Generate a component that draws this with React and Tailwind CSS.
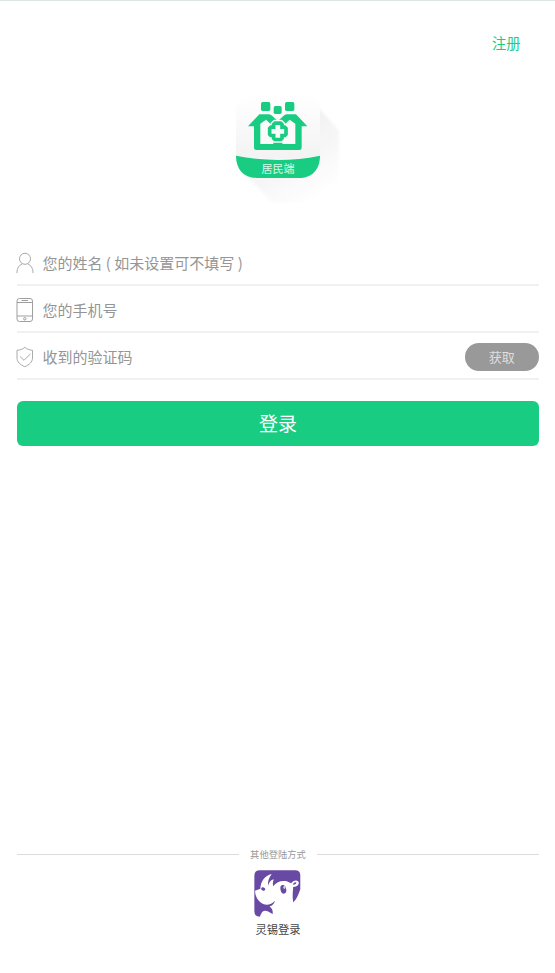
function AppLogo() {
  return (
    <svg width="130" height="120" viewBox="0 0 390 360">
      <defs>
        <linearGradient id="tile" x1="0" y1="0" x2="0" y2="1">
          <stop offset="0" stopColor="#ffffff" />
          <stop offset="1" stopColor="#f3f3f3" />
        </linearGradient>
        <linearGradient id="shade" gradientUnits="userSpaceOnUse" x1="170" y1="130" x2="290" y2="318">
          <stop offset="0" stopColor="#f1f1f1" />
          <stop offset="0.55" stopColor="#f8f8f8" />
          <stop offset="1" stopColor="#ffffff" />
        </linearGradient>
        <filter id="soften">
          <feGaussianBlur stdDeviation="5" />
        </filter>
      </defs>
      <path d="M276 48L342 122V340H144L62 254Z" fill="url(#shade)" filter="url(#soften)" />
      <path d="M33 70Q33 14 90 14H228Q285 14 285 70V204H33Z" fill="url(#tile)" />
      <path d="M33 197Q159 223 285 197C285 240 260 264 222 264H96C58 264 33 240 33 197Z" fill="#18cd82" />
      <g fill="#18cd82">
        <rect x="108" y="36" width="28" height="27" rx="5" />
        <rect x="146" y="48" width="24" height="24" rx="5" />
        <rect x="180" y="36" width="28" height="27" rx="5" />
        <path d="M69 109L103 73H131Q138 73 142 78L158.500 93L175 78Q179 73 186 73H213L247 109H230V173Q230 180 223 180H94Q87 180 87 173V109Z" />
      </g>
      <path d="M106 162V101L123 89L141 106L132 125L145 146V162ZM211 162V101L194 89L176 106L185 125L172 146V162Z" fill="#fafafa" />
      <g transform="translate(158.500 124)" strokeLinejoin="round">
        <path d="M-10-28H10L16-22V-18L18-16H22L28-10V10L22 16H18L16 18V22L10 28H-10L-16 22V18L-18 16H-22L-28 10V-10L-22-16H-18L-16-18V-22Z" fill="#18cd82" stroke="#fafafa" strokeWidth="13" />
        <path d="M-10-28H10L16-22V-18L18-16H22L28-10V10L22 16H18L16 18V22L10 28H-10L-16 22V18L-18 16H-22L-28 10V-10L-22-16H-18L-16-18V-22Z" fill="#18cd82" stroke="#18cd82" strokeWidth="4" />
        <path d="M-7-19H7V-7H19V7H7V19H-7V7H-19V-7H-7Z" fill="#fafafa" />
      </g>
      <text x="159" y="249" textAnchor="middle" fontSize="33" fill="#d9f9e9" className="font-['Noto_Sans_CJK_SC',sans-serif]">居民端</text>
    </svg>
  );
}

function UserIcon() {
  return (
    <svg width="18" height="24" viewBox="0 0 18 24" fill="none" stroke="#aaaaaa" strokeWidth="1">
      <circle cx="9" cy="7.8" r="5.5" />
      <path d="M.9 22C.9 17 3.2 14 6.3 12.900M11.8 12.900C14.8 14 17.1 17 17.1 22" />
    </svg>
  );
}

function PhoneIcon() {
  return (
    <svg width="18" height="24" viewBox="0 0 18 24" fill="none" stroke="#9f9f9f" strokeWidth="1">
      <rect x="1" y=".5" width="15.5" height="23" rx="2.5" />
      <path d="M1 4.5H16.5M1 18H16.5M5.500 2.5H12" />
      <circle cx="8.8" cy="20.8" r="1.2" />
    </svg>
  );
}

function ShieldIcon() {
  return (
    <svg width="18" height="24" viewBox="0 0 18 24" fill="none" stroke="#aaaaaa" strokeWidth="1" strokeLinejoin="round">
      <path d="M8.8 2.3C6.8 4.2 4 5.2 1 5.2V13C1 17 4.2 19.7 8.8 21.7C13.4 19.7 16.5 17 16.5 13V5.2C13.6 5.2 10.8 4.2 8.8 2.3Z" />
      <path d="M4 11.5L8 15.3L14.5 8.800" />
    </svg>
  );
}

function RhinoLogo() {
  return (
    <svg width="47" height="47" viewBox="0 0 141 141">
      <g transform="scale(1.06 1)">
        <path d="M17 1H116Q131 1 131 16V58C126 74 121 88 111 97L90 122L53 132L16 140Q1 140 1 124V17Q1 1 17 1Z" fill="#6849a3" />
        <path d="M3 62L18 56C19 34 30 17 50 12C42 24 38 36 40 47C42 38 47 30 56 28C53 36 53 42 54 49C64 35 78 31 93 34L105 40C111 29 127 28 127 39C126 48 118 50 111 51C110 65 108 80 111 97V141H16C21 129 23 123 31 122C41 121 47 130 53 132C54 121 51 116 44 109C52 107 58 100 59 92C50 103 38 107 26 102C12 95 3 79 3 62Z" fill="#ffffff" />
        <ellipse cx="26" cy="57" rx="6" ry="5" transform="rotate(20 26 57)" fill="#6849a3" />
        <ellipse cx="83" cy="58" rx="8" ry="13" transform="rotate(-12 83 58)" fill="#6849a3" />
        <ellipse cx="86" cy="52" rx="3" ry="5" fill="#d7cceb" />
        <path d="M110 44C112 37 120 35 120 39C119 43 115 44 110 44Z" fill="#6849a3" />
      </g>
    </svg>
  );
}

function Field({ icon, placeholder, children }) {
  return (
    <div className="flex h-[47px] items-center border-b-2 border-[#f1f1f1] pt-0.5">
      <div className="ml-[-1px]">{icon}</div>
      <span className="ml-[8.5px] flex-1 whitespace-pre text-[15px] leading-6 text-[#959595]">{placeholder}</span>
      {children}
    </div>
  );
}

export default function App() {
  return (
    <div className="flex h-[973px] w-[555px] flex-col border-t border-[#dfe5e5] bg-white font-['Noto_Sans_CJK_SC',sans-serif]">
      <header className="flex h-[89px] justify-end pt-[31px] pr-[34.5px]">
        <a className="text-[14.3px] leading-[22px] text-[#18cd82]">注册</a>
      </header>
      <div className="flex h-[149px] pl-[225px]">
        <AppLogo />
      </div>
      <main className="pr-4 pl-[17px]">
        <Field icon={<UserIcon />} placeholder={"您的姓名 ( 如未设置可不填写 )"} />
        <Field icon={<PhoneIcon />} placeholder="您的手机号" />
        <Field icon={<ShieldIcon />} placeholder="收到的验证码">
          <button className="h-7 w-[74.5px] rounded-full bg-[#999999] text-[13px] leading-7 text-[#dedede]">获取</button>
        </Field>
        <button className="mt-[21px] block h-[45px] w-full rounded-md bg-[#18cd82] pb-0.5 text-[19px] leading-[43px] text-white">登录</button>
      </main>
      <footer className="mt-auto flex h-[126px] flex-col items-center">
        <div className="flex w-full items-center pr-4 pl-[17px]">
          <div className="h-px flex-1 bg-[#dcdcdc]" />
          <span className="mx-[11px] text-[9.3px] leading-[14px] text-[#999999]">其他登陆方式</span>
          <div className="h-px flex-1 bg-[#dcdcdc]" />
        </div>
        <div className="mt-[9px] flex flex-col items-center">
          <RhinoLogo />
          <span className="mt-1 ml-px text-[11.3px] leading-4 text-[#444444]">灵锡登录</span>
        </div>
      </footer>
    </div>
  );
}
